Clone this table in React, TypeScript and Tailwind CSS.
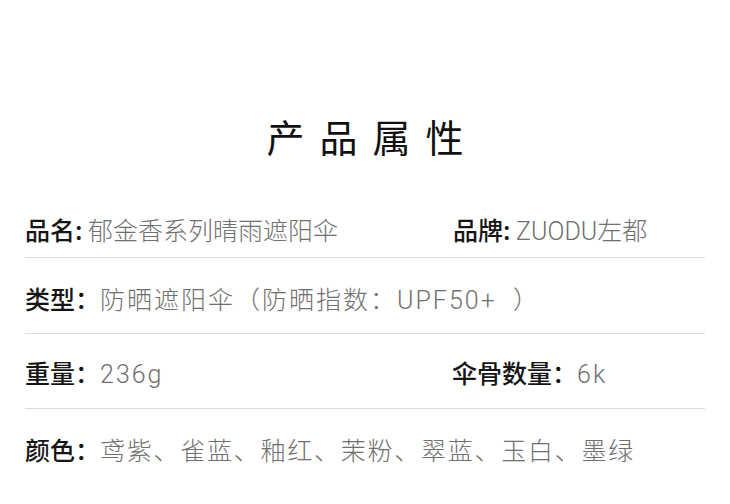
const cjk = "font-['Noto_Sans_CJK_SC',sans-serif]";
const val = "font-['Roboto','Noto_Sans_CJK_SC',sans-serif] font-light text-[#707070]";
const line = "h-[32px] leading-[32px] whitespace-nowrap";

function Label({ children }: { children: React.ReactNode }) {
  return <span className={`${cjk} font-medium text-[#151515]`}>{children}</span>;
}

export default function App() {
  return (
    <div className="w-[730px] h-[504px] bg-white overflow-hidden">
      {/* Title */}
      <h1
        className={`${cjk} mt-[117px] h-[38px] pl-[15px] text-center text-[38px] leading-[38px] tracking-[15px] text-[#111] font-normal`}
      >
        产品属性
      </h1>

      <div className="ml-[25px] w-[680px] text-[25px]">
        {/* 品名 / 品牌 */}
        <div className="flex pt-[58px] pb-[12px] border-b border-[#dcdcdc]">
          <div className={`w-[428px] ${line}`}>
            <Label>品名: </Label>
            <span className={val}>郁金香系列晴雨遮阳伞</span>
          </div>
          <div className={line}>
            <Label>品牌: </Label>
            <span className={val}>ZUODU左都</span>
          </div>
        </div>

        {/* 类型 */}
        <div className="pt-[24px] pb-[19px] border-b border-[#dcdcdc]">
          <div className={line}>
            <Label>类型：</Label>
            <span className={`${val} tracking-[2px]`}>防晒遮阳伞（防晒指数：UPF50+&nbsp; ）</span>
          </div>
        </div>

        {/* 重量 / 伞骨数量 */}
        <div className="flex pt-[22px] pb-[20px] border-b border-[#dcdcdc]">
          <div className={`w-[427px] ${line}`}>
            <Label>重量：</Label>
            <span className={`${val} tracking-[2px]`}>236g</span>
          </div>
          <div className={line}>
            <Label>伞骨数量：</Label>
            <span className={`${val} tracking-[2px]`}>6k</span>
          </div>
        </div>

        {/* 颜色 */}
        <div className="pt-[24px]">
          <div className={line}>
            <Label>颜色：</Label>
            <span className={`${val} tracking-[1.75px]`}>鸢紫、雀蓝、釉红、茉粉、翠蓝、玉白、墨绿</span>
          </div>
        </div>
      </div>
    </div>
  );
}
